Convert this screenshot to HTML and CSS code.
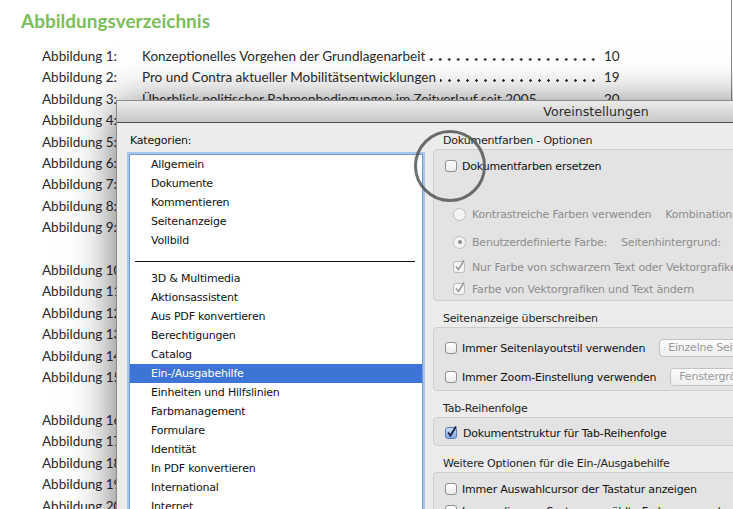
FILE: index.html
```html
<!DOCTYPE html>
<html lang="de">
<head>
  <meta charset="UTF-8" />
  <meta name="viewport" content="width=device-width, initial-scale=1.0" />
  <title>Voreinstellungen</title>
  <link rel="stylesheet" href="styles.css">
</head>
<body>
  <div class="page">
    <h1 class="toc-title">Abbildungsverzeichnis</h1>
    <div class="toc-group">
      <div class="toc-entry">
        <span class="toc-num">Abbildung 1:</span>
        <span class="toc-text">Konzeptionelles Vorgehen der Grundlagenarbeit</span>
        <span class="toc-leader"></span>
        <span class="toc-page">10</span>
      </div>
      <div class="toc-entry">
        <span class="toc-num">Abbildung 2:</span>
        <span class="toc-text">Pro und Contra aktueller Mobilitätsentwicklungen</span>
        <span class="toc-leader"></span>
        <span class="toc-page">19</span>
      </div>
      <div class="toc-entry">
        <span class="toc-num">Abbildung 3:</span>
        <span class="toc-text">Überblick politischer Rahmenbedingungen im Zeitverlauf seit 2005</span>
        <span class="toc-leader"></span>
        <span class="toc-page">20</span>
      </div>
      <div class="toc-entry"><span class="toc-num">Abbildung 4:</span></div>
      <div class="toc-entry"><span class="toc-num">Abbildung 5:</span></div>
      <div class="toc-entry"><span class="toc-num">Abbildung 6:</span></div>
      <div class="toc-entry"><span class="toc-num">Abbildung 7:</span></div>
      <div class="toc-entry"><span class="toc-num">Abbildung 8:</span></div>
      <div class="toc-entry"><span class="toc-num">Abbildung 9:</span></div>
    </div>
    <div class="toc-group">
      <div class="toc-entry"><span class="toc-num">Abbildung 10:</span></div>
      <div class="toc-entry"><span class="toc-num">Abbildung 11:</span></div>
      <div class="toc-entry"><span class="toc-num">Abbildung 12:</span></div>
      <div class="toc-entry"><span class="toc-num">Abbildung 13:</span></div>
      <div class="toc-entry"><span class="toc-num">Abbildung 14:</span></div>
      <div class="toc-entry"><span class="toc-num">Abbildung 15:</span></div>
    </div>
    <div class="toc-group">
      <div class="toc-entry"><span class="toc-num">Abbildung 16:</span></div>
      <div class="toc-entry"><span class="toc-num">Abbildung 17:</span></div>
      <div class="toc-entry"><span class="toc-num">Abbildung 18:</span></div>
      <div class="toc-entry"><span class="toc-num">Abbildung 19:</span></div>
      <div class="toc-entry"><span class="toc-num">Abbildung 20:</span></div>
    </div>
  </div>

  <div class="dialog">
    <div class="titlebar">Voreinstellungen</div>
    <div class="dialog-body">
      <div class="categories">
        <div class="cat-label">Kategorien:</div>
        <ul class="cat-list">
          <li>Allgemein</li>
          <li>Dokumente</li>
          <li>Kommentieren</li>
          <li>Seitenanzeige</li>
          <li>Vollbild</li>
          <li class="separator"></li>
          <li>3D &amp; Multimedia</li>
          <li>Aktionsassistent</li>
          <li>Aus PDF konvertieren</li>
          <li>Berechtigungen</li>
          <li>Catalog</li>
          <li class="selected">Ein-/Ausgabehilfe</li>
          <li>Einheiten und Hilfslinien</li>
          <li>Farbmanagement</li>
          <li>Formulare</li>
          <li>Identität</li>
          <li>In PDF konvertieren</li>
          <li>International</li>
          <li>Internet</li>
        </ul>
      </div>

      <div class="options">
        <div class="group-title">Dokumentfarben - Optionen</div>
        <div class="group">
          <div class="row">
            <span class="cb"></span>
            <span>Dokumentfarben ersetzen</span>
          </div>
          <div class="row indent disabled gap-big">
            <span class="radio"></span>
            <span>Kontrastreiche Farben verwenden</span>
            <span class="after">Kombination</span>
          </div>
          <div class="row indent disabled gap-sm">
            <span class="radio on"></span>
            <span>Benutzerdefinierte Farbe:</span>
            <span class="after">Seitenhintergrund:</span>
            <span class="swatch"></span>
          </div>
          <div class="row indent disabled gap-xs">
            <svg class="check" width="13" height="14" viewBox="0 0 13 14">
              <rect x="0.5" y="2.5" width="11" height="11" rx="2.5" fill="#f4f4f4" stroke="#bcbcbc"/>
              <path d="M3 7.5 L5.5 10.5 L11 1.5" fill="none" stroke="#9a9a9a" stroke-width="1.6"/>
            </svg>
            <span>Nur Farbe von schwarzem Text oder Vektorgrafiken ändern</span>
          </div>
          <div class="row indent disabled">
            <svg class="check" width="13" height="14" viewBox="0 0 13 14">
              <rect x="0.5" y="2.5" width="11" height="11" rx="2.5" fill="#f4f4f4" stroke="#bcbcbc"/>
              <path d="M3 7.5 L5.5 10.5 L11 1.5" fill="none" stroke="#9a9a9a" stroke-width="1.6"/>
            </svg>
            <span>Farbe von Vektorgrafiken und Text ändern</span>
          </div>
        </div>

        <div class="group-title">Seitenanzeige überschreiben</div>
        <div class="group group-view">
          <div class="row">
            <span class="cb"></span>
            <span>Immer Seitenlayoutstil verwenden</span>
            <span class="popup">Einzelne Seite</span>
          </div>
          <div class="row gap-md">
            <span class="cb"></span>
            <span>Immer Zoom-Einstellung verwenden</span>
            <span class="popup">Fenstergröße anpassen</span>
          </div>
        </div>

        <div class="group-title">Tab-Reihenfolge</div>
        <div class="group group-tab">
          <div class="row">
            <svg class="check" width="13" height="14" viewBox="0 0 13 14">
              <defs>
                <linearGradient id="cbBlue" x1="0" y1="0" x2="0" y2="1">
                  <stop offset="0" stop-color="#cfe0f7"/>
                  <stop offset="1" stop-color="#7fa7e0"/>
                </linearGradient>
              </defs>
              <rect x="0.5" y="2.5" width="11" height="11" rx="2.5" fill="url(#cbBlue)" stroke="#5a7bb5"/>
              <path d="M3 7.5 L5.5 10.5 L11 1.5" fill="none" stroke="#1b2547" stroke-width="1.9"/>
            </svg>
            <span>Dokumentstruktur für Tab-Reihenfolge</span>
          </div>
        </div>

        <div class="group-title">Weitere Optionen für die Ein-/Ausgabehilfe</div>
        <div class="group group-more">
          <div class="row">
            <span class="cb"></span>
            <span>Immer Auswahlcursor der Tastatur anzeigen</span>
          </div>
          <div class="row">
            <span class="cb"></span>
            <span>Immer die vom System gewählte Farbe verwenden</span>
          </div>
        </div>
      </div>
    </div>
  </div>

  <div class="highlight-ring"></div>
</body>
</html>
```

FILE: styles.css
```css
body {
  margin: 0;
  width: 733px;
  height: 509px;
  overflow: hidden;
  position: relative;
  background: #fff;
}

/* document behind the dialog */
.page {
  width: 731px;
  height: 509px;
  border-right: 1px solid #8c8c8c;
  font-family: Lato, "Open Sans", sans-serif;
  color: #2a2a2a;
}
.toc-title {
  margin: 0;
  padding: 9px 0 0 21px;
  font-size: 19px;
  line-height: 24px;
  font-weight: 700;
  color: #7bbd5b;
}
.toc-group {
  padding-left: 42px;
  width: 578px;
  margin-top: 21.4px;
}
.toc-group:first-of-type {
  margin-top: 13px;
}
.toc-entry {
  display: flex;
  font-size: 13.5px;
  line-height: 21.4px;
  white-space: nowrap;
}
.toc-num {
  width: 100px;
  flex-shrink: 0;
}
.toc-leader {
  flex: 1;
  margin: 0 6px 0 4px;
  background-image: radial-gradient(circle at 4.5px 1.5px, #2a2a2a 1px, transparent 1.5px);
  background-size: 9px 3px;
  background-position: right 0 top 12px;
  background-repeat: repeat-x;
}
.toc-page {
  width: 16px;
}

/* preferences dialog */
.dialog {
  position: absolute;
  left: 116px;
  top: 100px;
  width: 960px;
  height: 460px;
  background: #ececec;
  border: 1px solid #8a8a8a;
  box-sizing: border-box;
  box-shadow: 0 6px 42px rgba(0, 0, 0, 0.6);
  font-family: "DejaVu Sans", sans-serif;
  font-size: 11px;
  letter-spacing: -0.2px;
  color: #111;
}
.titlebar {
  height: 21px;
  line-height: 21px;
  text-align: center;
  font-size: 12.6px;
  letter-spacing: 0;
  color: #2b2b2b;
  background: linear-gradient(#ececec, #c8c8c8);
  border-bottom: 1px solid #4f4f4f;
}
.dialog-body {
  display: flex;
}
.categories {
  width: 305px;
  padding-left: 11px;
}
.cat-label {
  margin-top: 11px;
  padding-left: 2px;
  line-height: 14px;
}
.cat-list {
  list-style: none;
  margin: 6px 0 0 1px;
  padding: 0;
  width: 292px;
  height: 400px;
  background: #fff;
  border: 1px solid #6f9ad6;
  outline: 2px solid #a8c6ec;
}
.cat-list li {
  height: 19px;
  line-height: 19px;
  padding-left: 21px;
}
.cat-list li.separator {
  box-sizing: border-box;
  padding: 11px 7px 0 5px;
}
.cat-list li.separator::after {
  content: "";
  display: block;
  height: 1px;
  background: #111;
}
.cat-list li.selected {
  background: #3c75d5;
  color: #fff;
}

.options {
  width: 540px;
}
.group-title {
  margin: 11px 0 0 10px;
  line-height: 14px;
  color: #1e1e1e;
}
.group {
  margin-top: 1px;
  background: #e3e3e3;
  border: 1px solid #cecece;
  border-radius: 4px;
  padding: 5px 0 0 11px;
}
.group-view {
  padding-top: 9px;
  padding-bottom: 2px;
}
.group-tab {
  padding-top: 4px;
  padding-bottom: 1px;
}
.group-more {
  padding-top: 5px;
}
.row {
  display: flex;
  align-items: center;
  gap: 5px;
  height: 22px;
  white-space: nowrap;
}
.row.indent {
  padding-left: 8px;
  gap: 6px;
}
.row.gap-big {
  margin-top: 26px;
}
.row.gap-md {
  margin-top: 7px;
}
.row.gap-sm {
  margin-top: 6px;
}
.row.gap-xs {
  margin-top: 3px;
}
.row.disabled {
  color: #8d8d8d;
}
.cb {
  width: 12px;
  height: 12px;
  box-sizing: border-box;
  border: 1px solid #8f8f8f;
  border-radius: 3px;
  background: linear-gradient(#ffffff, #e9e9e9);
  flex-shrink: 0;
}
.check {
  margin-top: -3px;
  flex-shrink: 0;
}
.radio {
  width: 13px;
  height: 13px;
  box-sizing: border-box;
  border: 1px solid #c0c0c0;
  border-radius: 50%;
  background: #f4f4f4;
  display: flex;
  align-items: center;
  justify-content: center;
  flex-shrink: 0;
}
.radio.on::after {
  content: "";
  width: 4px;
  height: 4px;
  border-radius: 50%;
  background: #8a8a8a;
}
.after {
  margin-left: 8px;
}
.swatch {
  margin-left: 7px;
  width: 30px;
  height: 19px;
  box-sizing: border-box;
  border: 1px solid #c6c6c6;
  background: #f2f2f2;
}
.popup {
  margin-left: 9px;
  height: 18px;
  line-height: 16px;
  box-sizing: border-box;
  padding: 0 8px;
  border: 1px solid #c4c4c4;
  border-radius: 4px;
  background: linear-gradient(#fbfbfb, #efefef);
  color: #9a9a9a;
}

/* annotation circle over the first checkbox */
.highlight-ring {
  position: absolute;
  left: 414px;
  top: 130px;
  width: 72px;
  height: 72px;
  box-sizing: border-box;
  border: 3px solid rgba(85, 85, 85, 0.85);
  border-radius: 50%;
}
```
